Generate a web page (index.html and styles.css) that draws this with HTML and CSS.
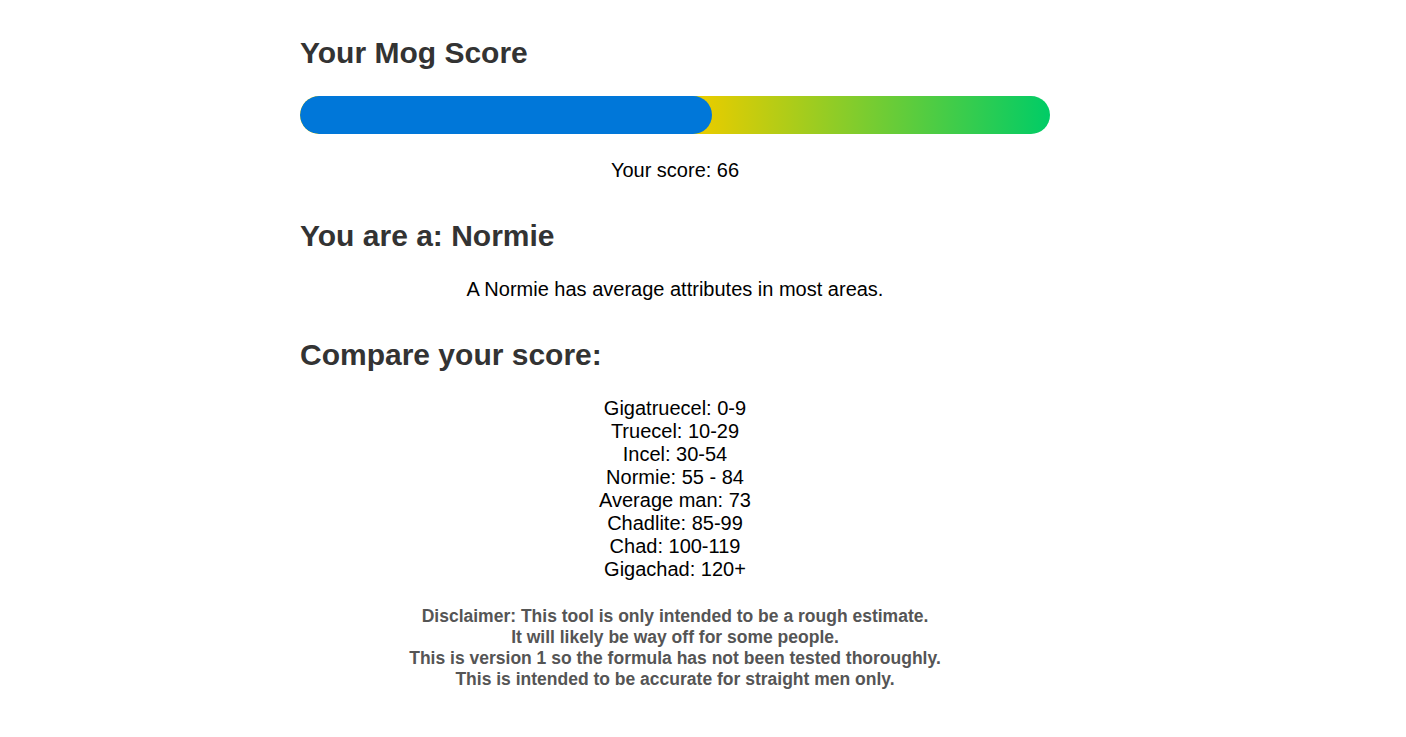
FILE: index.html
```html
<!DOCTYPE html>
<html>
<head>
<meta charset="utf-8">
<link rel="stylesheet" href="styles.css">
</head>
<body>
<main class="page">
  <h2 class="title">Your Mog Score</h2>
  <div class="bar">
    <div class="fill" style="width: 412px"></div>
  </div>
  <p class="score">Your score: 66</p>
  <h2 class="title">You are a: Normie</h2>
  <p class="desc">A Normie has average attributes in most areas.</p>
  <h2 class="title">Compare your score:</h2>
  <div class="list">
    <div>Gigatruecel: 0-9</div>
    <div>Truecel: 10-29</div>
    <div>Incel: 30-54</div>
    <div>Normie: 55 - 84</div>
    <div>Average man: 73</div>
    <div>Chadlite: 85-99</div>
    <div>Chad: 100-119</div>
    <div>Gigachad: 120+</div>
  </div>
  <div class="disclaimer">
    <div>Disclaimer: This tool is only intended to be a rough estimate.</div>
    <div>It will likely be way off for some people.</div>
    <div>This is version 1 so the formula has not been tested thoroughly.</div>
    <div>This is intended to be accurate for straight men only.</div>
  </div>
</main>
</body>
</html>
```
FILE: styles.css
```css
html, body {
  margin: 0;
  padding: 0;
  background: #fff;
}
body {
  font-family: "Liberation Sans", Arial, sans-serif;
  color: #000;
}
.page {
  width: 750px;
  margin-left: 300px;
  padding-top: 36px;
}
.title {
  font-size: 30px;
  font-weight: bold;
  color: #333;
  margin: 0;
  line-height: 34px;
}
.bar {
  margin-top: 26px;
  height: 38px;
  border-radius: 19px;
  background: linear-gradient(to right, #e6cc00 54%, #00cc66 100%);
  overflow: hidden;
}
.fill {
  height: 100%;
  background: #0077d9;
  border-radius: 19px;
}
.score {
  text-align: center;
  font-size: 20px;
  line-height: 23px;
  margin: 25px 0 37px;
}
.desc {
  text-align: center;
  font-size: 20px;
  line-height: 23px;
  margin: 25px 0 37px;
}
.list {
  margin-top: 25px;
  text-align: center;
  font-size: 20px;
  line-height: 23px;
}
.disclaimer {
  margin-top: 25px;
  text-align: center;
  font-size: 17.5px;
  font-weight: bold;
  line-height: 21px;
  color: #555;
}
```
